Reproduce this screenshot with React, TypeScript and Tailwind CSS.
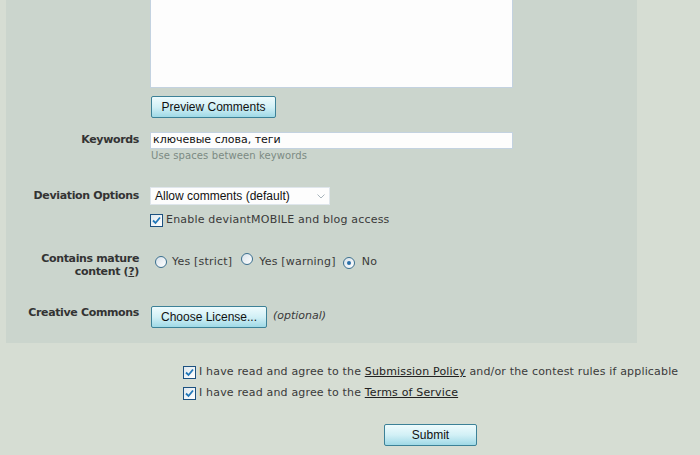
import React from 'react';

const verdana = { fontFamily: '"DejaVu Sans", Verdana, sans-serif' };
const arial = { fontFamily: '"Liberation Sans", Arial, sans-serif' };

const Check: React.FC = () => (
  <span className="inline-flex w-[13px] h-[13px] shrink-0 items-center justify-center border border-[#1c5180] bg-gradient-to-br from-[#dfe8ee] to-white">
    <svg width="9" height="9" viewBox="0 0 9 9">
      <path d="M1 4.5 L3.5 7 L8 1.5" fill="none" stroke="#2177b8" strokeWidth="1.8" />
    </svg>
  </span>
);

const Radio: React.FC<{ checked?: boolean }> = ({ checked }) => (
  <span className="inline-flex w-[12px] h-[12px] shrink-0 items-center justify-center rounded-full border border-[#3b6f8f] bg-gradient-to-br from-[#d8e2ea] to-white">
    {checked && <span className="w-[4px] h-[4px] rounded-full bg-[#2a6fa8]" />}
  </span>
);

const Btn: React.FC<{ children: React.ReactNode; className?: string }> = ({ children, className }) => (
  <button
    className={`h-[22px] border border-[#3c8197] rounded-[2px] bg-gradient-to-b from-[#eefbfd] via-[#d2f0f6] to-[#9fd9e6] text-[12px] text-[#111] leading-none ${className ?? ''}`}
    style={arial}
  >
    {children}
  </button>
);

const Label: React.FC<{ children: React.ReactNode; className?: string }> = ({ children, className }) => (
  <div
    className={`text-right text-[11px] font-bold tracking-[-0.35px] text-[#333] leading-[13px] ${className ?? ''}`}
    style={verdana}
  >
    {children}
  </div>
);

export default function App() {
  return (
    <div className="w-[700px] h-[455px] overflow-hidden bg-[#d6ddd3]" style={verdana}>
      <div className="ml-[6px] w-[631px] h-[343px] bg-[#cbd5cd]">
        <div className="grid grid-cols-[133px_1fr] gap-x-[11px]">
          {/* Comments */}
          <div />
          <div className="flex flex-col items-start">
            <div className="w-[363px] h-[88px] bg-[#fdfdfd] border border-t-0 border-[#c3d2e0]" />
            <Btn className="mt-[8px] ml-[1px] w-[125px]">Preview Comments</Btn>
          </div>

          {/* Keywords */}
          <Label className="mt-[15px]">Keywords</Label>
          <div className="mt-[14px] flex flex-col">
            <div className="w-[363px] h-[17px] bg-[#fdfdfd] border border-[#c3d2e0] flex items-center px-[2px] text-[11px] text-[#111]">
              ключевые слова, теги
            </div>
            <div className="mt-[1px] ml-[1px] text-[10px] tracking-[0.1px] text-[#7b8a83] leading-[12px]">
              Use spaces between keywords
            </div>
          </div>

          {/* Deviation Options */}
          <Label className="mt-[27px]">Deviation Options</Label>
          <div className="mt-[25px] flex flex-col">
            <div
              className="w-[180px] h-[18px] bg-[#fdfdfd] border border-[#dfe6ec] flex items-center justify-between pl-[4px] pr-[4px] text-[12px] text-[#111]"
              style={arial}
            >
              <span>Allow comments (default)</span>
              <svg width="8" height="5" viewBox="0 0 8 5">
                <path d="M0.5 0.5 L4 4 L7.5 0.5" fill="none" stroke="#a8b4bc" strokeWidth="1" />
              </svg>
            </div>
            <div className="mt-[7px] flex items-center gap-[3px] text-[11px] tracking-[0.2px] text-[#3a3a3a]">
              <Check />
              <span>Enable deviantMOBILE and blog access</span>
            </div>
          </div>

          {/* Mature */}
          <Label className="mt-[23px]">
            Contains mature
            <br />
            content (<span className="underline">?</span>)
          </Label>
          <div className="mt-[18px] ml-[5px] flex items-center text-[11px] tracking-[0.2px] text-[#3a3a3a]">
            <Radio />
            <span className="ml-[5px]">Yes [strict]</span>
            <span className="ml-[9px]"><Radio /></span>
            <span className="ml-[6px]">Yes [warning]</span>
            <span className="ml-[7px]"><Radio checked /></span>
            <span className="ml-[7px]">No</span>
          </div>

          {/* Creative Commons */}
          <Label className="mt-[28px]">Creative Commons</Label>
          <div className="mt-[28px] flex items-center">
            <Btn className="ml-[1px] w-[116px]">Choose License...</Btn>
            <span className="ml-[6px] text-[11px] italic text-[#3a3a3a]">(optional)</span>
          </div>
        </div>
      </div>

      <div className="ml-[183px] mt-[23px] flex flex-col gap-[8px] text-[11px] tracking-[0.17px] text-[#3a3a3a]">
        <div className="flex items-center gap-[3px] h-[13px]">
          <Check />
          <span>
            I have read and agree to the <span className="underline text-[#222]">Submission Policy</span> and/or the
            contest rules if applicable
          </span>
        </div>
        <div className="flex items-center gap-[3px] h-[13px]">
          <Check />
          <span>
            I have read and agree to the <span className="underline text-[#222]">Terms of Service</span>
          </span>
        </div>
      </div>

      <div className="ml-[384px] mt-[22px]">
        <Btn className="w-[93px]">Submit</Btn>
      </div>
    </div>
  );
}
